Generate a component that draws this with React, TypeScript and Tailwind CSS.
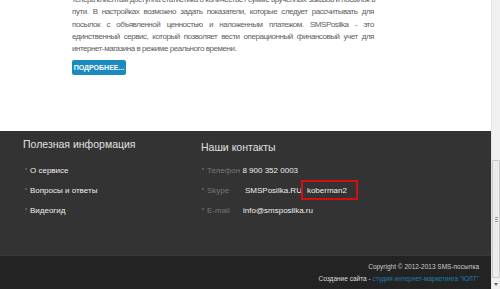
import React from "react";

const lines = [
  "теперь клиентам доступна статистика о количестве / сумме врученных заказов и посылок в",
  "пути. В настройках возможно задать показатели, которые следует рассчитывать для",
  "посылок с объявленной ценностью и наложенным платежом. SMSPosilka - это",
  "единственный сервис, который позволяет вести операционный финансовый учет для",
];

function Bullet() {
  return <span className="absolute left-[-5px] top-[3px] h-[2px] w-[2px] bg-[#5a5a5a]" />;
}

export default function App() {
  return (
    <div
      className="flex h-[289px] w-[500px] overflow-hidden bg-white"
      style={{ fontFamily: '"Liberation Sans", Arial, sans-serif' }}
    >
      <div className="flex w-[491px] flex-col">
        <div className="h-[131px] pl-[72px] pr-[117px]">
          <div className="-mt-[6px] text-[8px] leading-[12.3px] tracking-[-0.45px] text-[#5e5e5e]">
            {lines.map((l, i) => (
              <div key={i} className="text-justify [text-align-last:justify] whitespace-nowrap">
                {l}
              </div>
            ))}
            <div>интернет-магазина в режиме реального времени.</div>
          </div>
          <div className="mt-[5px] flex h-[15px] w-[54px] items-center justify-center rounded-[2px] bg-[#1b8bbf] text-[7px] font-bold text-white">
            ПОДРОБНЕЕ...
          </div>
        </div>
        <div className="flex h-[124px] bg-[#333333] pt-[6px]">
          <div className="w-[201px] pl-[23px]">
            <div className="text-[10.5px] leading-[14px] text-[#e0e0e0]">Полезная информация</div>
            <div className="mt-[14px] flex flex-col gap-[9px] pl-[7px] text-[8px] leading-[11px] text-[#eee]">
              <div className="relative"><Bullet />О сервисе</div>
              <div className="relative"><Bullet />Вопросы и ответы</div>
              <div className="relative"><Bullet />Видеогид</div>
            </div>
          </div>
          <div>
            <div className="pt-[3px] text-[10.5px] leading-[14px] text-[#e0e0e0]">Наши контакты</div>
            <div className="mt-[11px] flex flex-col gap-[9px] pl-[6px] text-[8px] leading-[11px]">
              <div className="relative">
                <Bullet />
                <span className="text-[#777]">Телефон</span>{" "}
                <span className="text-[#eee]">8 900 352 0003</span>
              </div>
              <div className="relative flex">
                <Bullet />
                <span className="w-[38px] text-[#777]">Skype</span>
                <span className="text-[#eee]">SMSPosilka.RU</span>
                <span className="relative ml-[5px] text-[#eee]">
                  koberman2
                  <span className="absolute left-[-6px] top-[-5px] h-[20px] w-[57px] border-2 border-[#d40f12]" />
                </span>
              </div>
              <div className="relative flex">
                <Bullet />
                <span className="w-[36px] text-[#777]">E-mail</span>
                <span className="text-[#eee]">info@smsposilka.ru</span>
              </div>
            </div>
          </div>
        </div>
        <div className="flex flex-1 flex-col items-end border-t border-[#3a3a3a] bg-[#232323] pr-[12px] pt-[5px] text-[6.5px] leading-[12px]">
          <div className="text-[#ccc]">Copyright © 2012-2013 SMS-посылка</div>
          <div>
            <span className="text-[#ddd]">Создание сайта - </span>
            <span className="text-[#1c7fa9]">студия интернет-маркетинга "ЮЛТ"</span>
          </div>
        </div>
      </div>
      <div className="relative w-[9px] border-l border-[#e3e3e3] bg-[#f0f0f0]">
        <div className="absolute left-0 top-[160px] flex h-[118px] w-[8px] items-center justify-center rounded-[1px] border border-[#c8c8c8] bg-[#ececec]">
          <div className="flex flex-col gap-[1px]">
            <span className="h-px w-[3px] bg-[#999]" />
            <span className="h-px w-[3px] bg-[#999]" />
            <span className="h-px w-[3px] bg-[#999]" />
          </div>
        </div>
        <div className="absolute bottom-[3px] left-[2px] h-0 w-0 border-x-[2.5px] border-t-[3px] border-x-transparent border-t-[#666]" />
      </div>
    </div>
  );
}
